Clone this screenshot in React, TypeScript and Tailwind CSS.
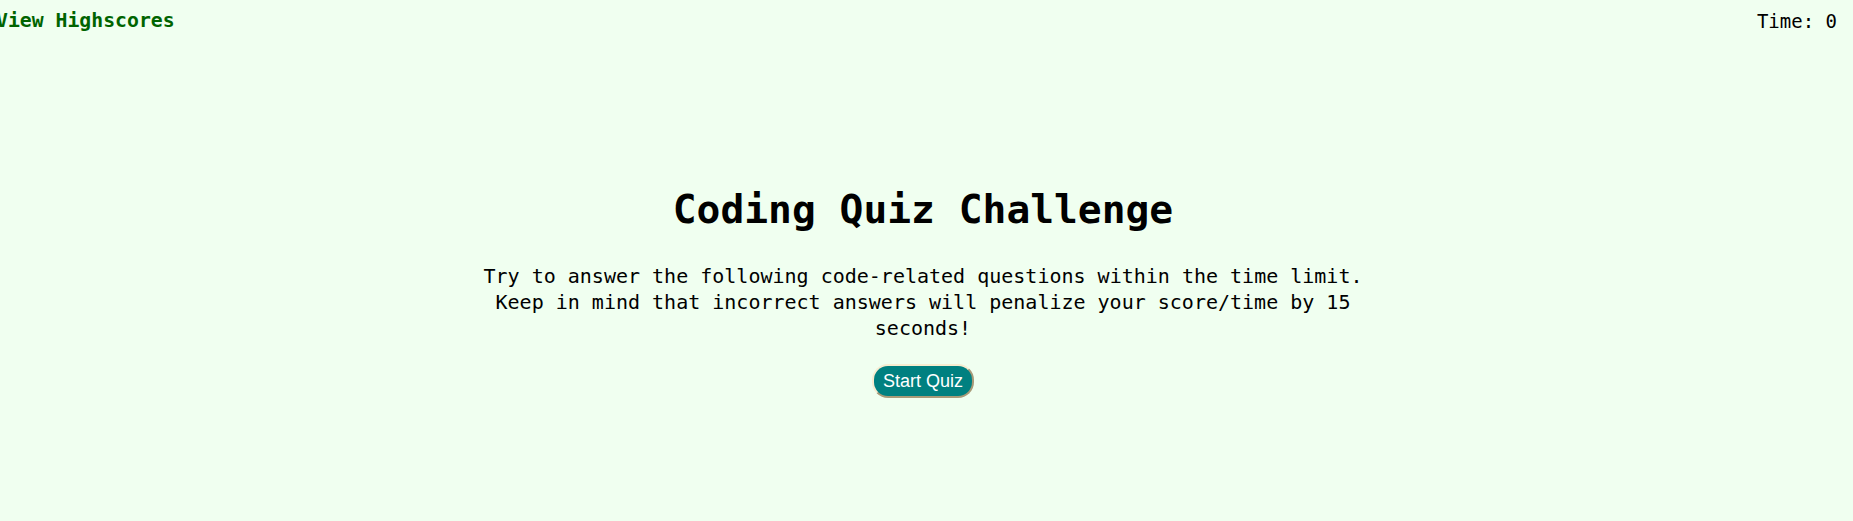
export default function App() {
	return (
		<div className="min-h-[521px] bg-[#f0fff0] font-['DejaVu_Sans_Mono',monospace] text-black">
			<header className="flex items-start justify-between pt-[8px] pr-[16px]">
				<a className="-ml-[4px] text-[19.8px] font-bold leading-[26px] text-[#006400]" href="#">
					View Highscores
				</a>
				<span className="text-[19px] leading-[26px]">Time: 0</span>
			</header>
			<main className="flex flex-col items-center pt-[151px] pr-[7px]">
				<h1 className="text-[39.6px] font-bold leading-[48px]">Coding Quiz Challenge</h1>
				<p className="mt-[30px] max-w-[920px] text-center text-[20px] leading-[26px]">
					Try to answer the following code-related questions within the time limit. Keep in mind that
					incorrect answers will penalize your score/time by 15 seconds!
				</p>
				<button className="mt-[23px] h-[34px] w-[102px] rounded-[16px] border-2 border-t-[#f8ecd0] border-l-[#f8ecd0] border-r-[#a89a78] border-b-[#a89a78] bg-[#008080] font-['Liberation_Sans',Arial,sans-serif] text-[18px] text-white">
					Start Quiz
				</button>
			</main>
		</div>
	);
}
